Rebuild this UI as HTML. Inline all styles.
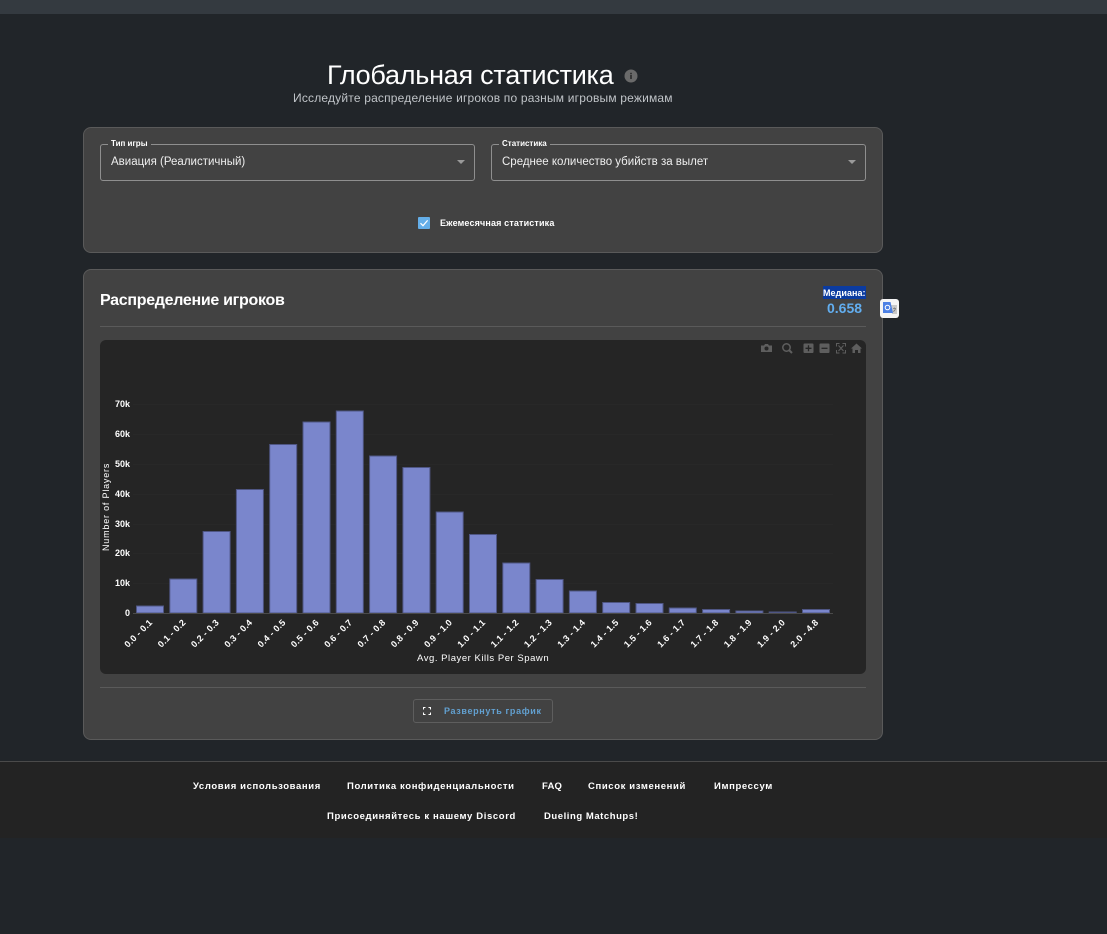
<!DOCTYPE html>
<html lang="ru"><head><meta charset="utf-8"><title>Глобальная статистика</title>
<style>
html,body{margin:0;padding:0;background:#212529;width:1107px;height:934px;overflow:hidden}
body{position:relative;font-family:"Liberation Sans",sans-serif;color:#fff}
.a{position:absolute;white-space:nowrap}
.card{position:absolute;background:#424242;border:1px solid #5a5a5a;border-radius:8px;box-sizing:border-box}
.sel{position:absolute;box-sizing:border-box;border:1px solid #8f8f8f;border-radius:3px;height:37px;width:375px;top:144px}
.lab{position:absolute;top:138px;background:#424242;font-size:8px;font-weight:bold;padding:0 3px;line-height:11px;color:#fff}
.val{position:absolute;top:155px;font-size:11.5px;line-height:14px;color:#eee;white-space:nowrap}
.arr{position:absolute;top:160px;width:0;height:0;border-left:4px solid transparent;border-right:4px solid transparent;border-top:4px solid #9a9a9a}
.f{position:absolute;font-size:9.5px;font-weight:bold;color:#fff;white-space:nowrap;line-height:12px;letter-spacing:.62px}
</style></head><body>
<div class="a" style="left:0;top:0;width:1107px;height:14px;background:#343a40"></div>

<div class="a" style="left:327px;top:59px;font-size:27px;line-height:32px;color:#fff;letter-spacing:-.25px">Глобальная статистика</div>
<svg class="a" style="left:624px;top:69px" width="14" height="14" viewBox="0 0 14 14"><circle cx="7" cy="7" r="6.5" fill="#6a6a6a"/><rect x="6.2" y="6" width="1.6" height="4" fill="#2a2a2a"/><rect x="6.2" y="3.8" width="1.6" height="1.5" fill="#2a2a2a"/></svg>
<div class="a" style="left:293px;top:91px;font-size:12px;line-height:15px;color:#c0c4c8;letter-spacing:.19px">Исследуйте распределение игроков по разным игровым режимам</div>

<div class="card" style="left:83px;top:127px;width:800px;height:126px"></div>
<div class="sel" style="left:100px"></div>
<div class="lab" style="left:108px">Тип игры</div>
<div class="val" style="left:111px">Авиация (Реалистичный)</div>
<div class="arr" style="left:457px"></div>
<div class="sel" style="left:491px"></div>
<div class="lab" style="left:499px">Статистика</div>
<div class="val" style="left:502px">Среднее количество убийств за вылет</div>
<div class="arr" style="left:848px"></div>
<svg class="a" style="left:418px;top:217px" width="12" height="12" viewBox="0 0 12 12"><rect width="12" height="12" rx="1" fill="#64aee8"/><path d="M2.5 6.2 L5 8.7 L9.6 3.4" fill="none" stroke="#fff" stroke-width="1.2"/></svg>
<div class="a" style="left:440px;top:217px;font-size:9px;font-weight:bold;line-height:12px;letter-spacing:.15px">Ежемесячная статистика</div>

<div class="card" style="left:83px;top:269px;width:800px;height:471px"></div>
<div class="a" style="left:100px;top:291px;font-size:16px;font-weight:bold;line-height:20px;letter-spacing:-.3px">Распределение игроков</div>
<div class="a" style="left:823px;top:286px;width:43px;height:13px;background:#0b3ba0"></div>
<div class="a" style="left:823px;top:287px;font-size:9px;font-weight:bold;line-height:12px;letter-spacing:.05px">Медиана:</div>
<div class="a" style="left:827px;top:300px;font-size:14px;font-weight:bold;line-height:17px;color:#62aef0">0.658</div>
<svg class="a" style="left:880px;top:299px" width="19" height="19" viewBox="0 0 19 19"><rect width="19" height="19" rx="3" fill="#f4f4f4"/><path d="M11 6h6v9h-5z" fill="#c9c9c9"/><path d="M3 3h7.500l2.500 11H3z" fill="#4c80e4"/><circle cx="7.500" cy="8.500" r="2.300" fill="none" stroke="#fff" stroke-width="1"/><path d="M13 9.500h3M14.500 8.500v1M15.500 9.500c-.3 1.500-1.200 2.500-2.300 3" stroke="#777" stroke-width=".7" fill="none"/></svg>
<div class="a" style="left:100px;top:326px;width:766px;height:1px;background:#5a5a5a"></div>

<div class="a" style="left:100px;top:340px;width:766px;height:334px;background:#252525;border-radius:6px"></div>

<svg class="a" style="left:100px;top:340px" width="766" height="334" viewBox="100 340 766 334">
<g stroke="#282828" stroke-width="1"><path d="M133 583.500H833M133 553.500H833M133 524.500H833M133 494.500H833M133 464.500H833M133 434.500H833M133 404.500H833"/></g>
<g fill="#7a86cc" stroke="#4f5684" stroke-width="1">
<rect x="136.500" y="606" width="27" height="7"/>
<rect x="169.800" y="579" width="27" height="34"/>
<rect x="203.100" y="531.500" width="27" height="81.500"/>
<rect x="236.400" y="489.500" width="27" height="123.500"/>
<rect x="269.700" y="444.500" width="27" height="168.500"/>
<rect x="303" y="422" width="27" height="191"/>
<rect x="336.300" y="411" width="27" height="202"/>
<rect x="369.600" y="456" width="27" height="157"/>
<rect x="402.900" y="467.500" width="27" height="145.500"/>
<rect x="436.200" y="512" width="27" height="101"/>
<rect x="469.500" y="534.500" width="27" height="78.500"/>
<rect x="502.800" y="563" width="27" height="50"/>
<rect x="536.100" y="579.500" width="27" height="33.500"/>
<rect x="569.400" y="591" width="27" height="22"/>
<rect x="602.700" y="602.500" width="27" height="10.500"/>
<rect x="636" y="603.500" width="27" height="9.500"/>
<rect x="669.300" y="608" width="27" height="5"/>
<rect x="702.600" y="609.500" width="27" height="3.500"/>
<rect x="735.900" y="611" width="27" height="2"/>
<rect x="769.200" y="612" width="27" height="1"/>
<rect x="802.500" y="609.500" width="27" height="3.500"/>
</g>
<path d="M133 613.500H833" stroke="#4a4a4a" stroke-width="1"/>
<g font-family="Liberation Sans,sans-serif" font-size="9" font-weight="bold" fill="#fff" text-anchor="end">
<text x="130" y="407">70k</text><text x="130" y="437">60k</text><text x="130" y="467">50k</text><text x="130" y="497">40k</text><text x="130" y="527">30k</text><text x="130" y="556">20k</text><text x="130" y="586">10k</text><text x="130" y="616">0</text>
</g>
<text transform="translate(109 551) rotate(-90)" font-family="Liberation Sans,sans-serif" font-size="9" fill="#fff" letter-spacing=".8">Number of Players</text>
<g font-family="Liberation Sans,sans-serif" font-size="9" font-weight="bold" fill="#fff" text-anchor="end" letter-spacing=".25">
<text transform="translate(153 623) rotate(-45)">0.0 - 0.1</text>
<text transform="translate(186.300 623) rotate(-45)">0.1 - 0.2</text>
<text transform="translate(219.600 623) rotate(-45)">0.2 - 0.3</text>
<text transform="translate(252.900 623) rotate(-45)">0.3 - 0.4</text>
<text transform="translate(286.200 623) rotate(-45)">0.4 - 0.5</text>
<text transform="translate(319.500 623) rotate(-45)">0.5 - 0.6</text>
<text transform="translate(352.800 623) rotate(-45)">0.6 - 0.7</text>
<text transform="translate(386.100 623) rotate(-45)">0.7 - 0.8</text>
<text transform="translate(419.400 623) rotate(-45)">0.8 - 0.9</text>
<text transform="translate(452.700 623) rotate(-45)">0.9 - 1.0</text>
<text transform="translate(486 623) rotate(-45)">1.0 - 1.1</text>
<text transform="translate(519.300 623) rotate(-45)">1.1 - 1.2</text>
<text transform="translate(552.600 623) rotate(-45)">1.2 - 1.3</text>
<text transform="translate(585.900 623) rotate(-45)">1.3 - 1.4</text>
<text transform="translate(619.200 623) rotate(-45)">1.4 - 1.5</text>
<text transform="translate(652.500 623) rotate(-45)">1.5 - 1.6</text>
<text transform="translate(685.800 623) rotate(-45)">1.6 - 1.7</text>
<text transform="translate(719.100 623) rotate(-45)">1.7 - 1.8</text>
<text transform="translate(752.400 623) rotate(-45)">1.8 - 1.9</text>
<text transform="translate(785.700 623) rotate(-45)">1.9 - 2.0</text>
<text transform="translate(819 623) rotate(-45)">2.0 - 4.8</text>
</g>
<text x="417" y="661" font-family="Liberation Sans,sans-serif" font-size="9.500" fill="#fff" letter-spacing=".54">Avg. Player Kills Per Spawn</text>
<!-- modebar -->
<g fill="#5e5e5e">
<path d="M761 345.500h3l1-1.500h3l1 1.500h3v6.500h-11z"/><circle cx="766.500" cy="348.500" r="2" fill="#252525"/>
<circle cx="786.500" cy="347.500" r="3.700" fill="none" stroke="#5e5e5e" stroke-width="1.500"/><path d="M789 350l3 3" stroke="#5e5e5e" stroke-width="2"/>
<rect x="803.500" y="343.500" width="10" height="9.500" rx="1"/><path d="M805.500 348.300h6M808.500 345.300v6" stroke="#252525" stroke-width="1.300"/>
<rect x="819.500" y="343.500" width="10" height="9.500" rx="1"/><path d="M821.500 348.300h6" stroke="#252525" stroke-width="1.300"/>
<path d="M851 348.500l5.500-5 5.500 5h-1.500v4.500h-2.500v-3h-3v3h-2.500v-4.500z"/>
</g>
<path d="M836.500 346.500v-3h3M842.500 343.500h3v3M845.500 350v3h-3M839.500 353h-3v-3M838.500 345.500l5 5.500M843.500 345.500l-5 5.500" stroke="#5e5e5e" stroke-width="1" fill="none"/>
</svg>

<div class="a" style="left:100px;top:687px;width:766px;height:1px;background:#5a5a5a"></div>
<div class="a" style="left:413px;top:699px;width:140px;height:24px;box-sizing:border-box;border:1px solid #5e5e5e;border-radius:3px"></div>
<svg class="a" style="left:423px;top:707px" width="8" height="8" viewBox="0 0 8 8"><path d="M.5 2.500V.5H2.500M5.500 .5h2V2.500M7.500 5.500v2H5.500M2.500 7.500H.5V5.500" fill="none" stroke="#fff" stroke-width="1.100"/></svg>
<div class="a" style="left:444px;top:705px;font-size:9px;font-weight:bold;line-height:12px;color:#62a0d0;letter-spacing:.65px">Развернуть график</div>

<div class="a" style="left:0;top:761px;width:1107px;height:1px;background:#4a4a4a"></div>
<div class="a" style="left:0;top:762px;width:1107px;height:76px;background:#232323"></div>
<div class="f" style="left:193px;top:781px">Условия использования</div>
<div class="f" style="left:347px;top:781px">Политика конфиденциальности</div>
<div class="f" style="left:542px;top:781px;letter-spacing:.2px">FAQ</div>
<div class="f" style="left:588px;top:781px">Список изменений</div>
<div class="f" style="left:714px;top:781px">Импрессум</div>
<div class="f" style="left:327px;top:811px">Присоединяйтесь к нашему Discord</div>
<div class="f" style="left:544px;top:811px;letter-spacing:.55px">Dueling Matchups!</div>
</body></html>
